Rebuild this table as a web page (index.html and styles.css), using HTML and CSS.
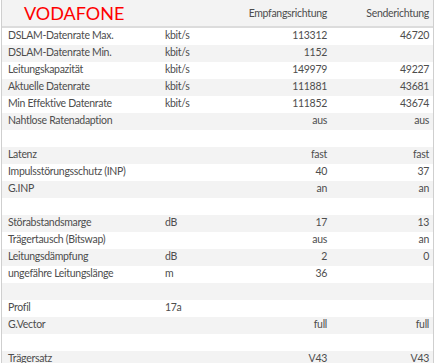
FILE: index.html
```html
<!DOCTYPE html>
<html lang="de">
<head>
<meta charset="utf-8">
<link rel="stylesheet" href="styles.css">
</head>
<body>
<div class="panel">
  <table class="dsl">
    <colgroup>
      <col class="c-label"><col class="c-unit"><col class="c-down"><col class="c-up">
    </colgroup>
    <thead>
      <tr>
        <th class="brand" colspan="2">VODAFONE</th>
        <th class="num">Empfangsrichtung</th>
        <th class="num">Senderichtung</th>
      </tr>
    </thead>
    <tbody>
      <tr><td>DSLAM-Datenrate Max.</td><td>kbit/s</td><td class="num">113312</td><td class="num">46720</td></tr>
      <tr><td>DSLAM-Datenrate Min.</td><td>kbit/s</td><td class="num">1152</td><td class="num"></td></tr>
      <tr><td>Leitungskapazität</td><td>kbit/s</td><td class="num">149979</td><td class="num">49227</td></tr>
      <tr><td>Aktuelle Datenrate</td><td>kbit/s</td><td class="num">111881</td><td class="num">43681</td></tr>
      <tr><td>Min Effektive Datenrate</td><td>kbit/s</td><td class="num">111852</td><td class="num">43674</td></tr>
      <tr><td>Nahtlose Ratenadaption</td><td></td><td class="num">aus</td><td class="num">aus</td></tr>
      <tr><td></td><td></td><td></td><td></td></tr>
      <tr><td>Latenz</td><td></td><td class="num">fast</td><td class="num">fast</td></tr>
      <tr><td>Impulsstörungsschutz (INP)</td><td></td><td class="num">40</td><td class="num">37</td></tr>
      <tr><td>G.INP</td><td></td><td class="num">an</td><td class="num">an</td></tr>
      <tr><td></td><td></td><td></td><td></td></tr>
      <tr><td>Störabstandsmarge</td><td>dB</td><td class="num">17</td><td class="num">13</td></tr>
      <tr><td>Trägertausch (Bitswap)</td><td></td><td class="num">aus</td><td class="num">an</td></tr>
      <tr><td>Leitungsdämpfung</td><td>dB</td><td class="num">2</td><td class="num">0</td></tr>
      <tr><td>ungefähre Leitungslänge</td><td>m</td><td class="num">36</td><td class="num"></td></tr>
      <tr><td></td><td></td><td></td><td></td></tr>
      <tr><td>Profil</td><td>17a</td><td></td><td></td></tr>
      <tr><td>G.Vector</td><td></td><td class="num">full</td><td class="num">full</td></tr>
      <tr><td></td><td></td><td></td><td></td></tr>
      <tr><td>Trägersatz</td><td></td><td class="num">V43</td><td class="num">V43</td></tr>
    </tbody>
  </table>
</div>
</body>
</html>
```
FILE: styles.css
```css
html, body {
  margin: 0;
  padding: 0;
  background: #ffffff;
}
body {
  font-family: Lato, "Open Sans", sans-serif;
  font-size: 10.5px;
  letter-spacing: -0.3px;
  color: #4d4d4d;
}
.panel {
  margin-left: 1px;
  width: 431px;
  border-left: 1px solid #cfcfcf;
  border-right: 1px solid #cfcfcf;
  min-height: 380px;
}
.dsl {
  width: 100%;
  border-collapse: collapse;
  table-layout: fixed;
}
.c-label { width: 157px; }
.c-unit { width: 81px; }
.c-down { width: 93px; }
.c-up { width: 100px; }
.dsl th, .dsl td {
  padding: 0 6px;
  height: 17px;
  line-height: 15px;
  vertical-align: top;
  white-space: nowrap;
  overflow: hidden;
  text-align: left;
  font-weight: normal;
}
.dsl td:last-child, .dsl th:last-child {
  padding-right: 4px;
}
.dsl thead th {
  background: #f3f3f3;
  height: 23px;
  line-height: 23px;
  border-bottom: 2px solid #dcdcdc;
  vertical-align: middle;
}
.dsl th.brand {
  color: #ff0000;
  font-size: 18px;
  letter-spacing: 0;
  padding-left: 22px;
  line-height: 26px;
}
.dsl .num {
  text-align: right;
}
.dsl tbody tr:nth-child(even) td {
  background: #f3f3f3;
}
```
